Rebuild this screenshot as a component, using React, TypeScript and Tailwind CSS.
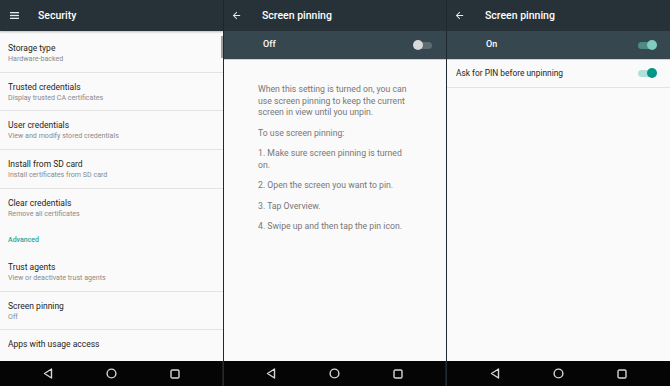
import React from "react";

const font = { fontFamily: "Roboto, 'Noto Sans', sans-serif" };

function NavBar({ last }: { last?: boolean }) {
  return (
    <div className={`h-[25px] bg-[#050505] flex items-center justify-center gap-[53px] ${last ? "" : "border-r border-[#1c1c1c]"}`}>
      <svg width="10" height="11" viewBox="0 0 10 11">
        <path d="M8.5 1 L1.5 5.5 L8.5 10 Z" fill="none" stroke="#d6d6d6" strokeWidth="1.4" strokeLinejoin="round" />
      </svg>
      <svg width="11" height="11" viewBox="0 0 11 11">
        <circle cx="5.5" cy="5.5" r="4.4" fill="none" stroke="#d6d6d6" strokeWidth="1.4" />
      </svg>
      <svg width="10" height="10" viewBox="0 0 10 10">
        <rect x="1" y="1" width="8" height="8" rx="1.3" fill="none" stroke="#d6d6d6" strokeWidth="1.4" />
      </svg>
    </div>
  );
}

function BackArrow() {
  return (
    <svg width="11" height="11" viewBox="0 0 24 24">
      <path d="M20 11H7.83l5.59-5.59L12 4l-8 8 8 8 1.41-1.41L7.83 13H20v-2z" fill="#e8ecee" />
    </svg>
  );
}

function Item({ title, sub, divider = true }: { title: string; sub?: string; divider?: boolean }) {
  return (
    <div className={`h-[38.7px] pl-[8px] pt-[9px] ${divider ? "border-b border-[#e3e3e3]" : ""}`}>
      <div className="text-[8.5px] leading-[11px] text-[#1e1e1e]">{title}</div>
      {sub && <div className="text-[7.1px] leading-[10px] text-[#8a8a8a]">{sub}</div>}
    </div>
  );
}

function SecurityPanel() {
  return (
    <div className="w-[223px] h-full flex flex-col bg-[#fafafa] relative">
      <div className="h-[31px] bg-[#263238] flex items-center shadow-[0_1px_2px_rgba(0,0,0,0.25)] z-10">
        <svg width="9" height="7" viewBox="0 0 9 7" className="ml-[10px]">
          <rect x="0" y="0" width="9" height="1.3" fill="#e8ecee" />
          <rect x="0" y="2.85" width="9" height="1.3" fill="#e8ecee" />
          <rect x="0" y="5.7" width="9" height="1.3" fill="#e8ecee" />
        </svg>
        <span className="ml-[19px] text-[10.5px] font-medium text-white">Security</span>
      </div>
      <div className="absolute right-0 top-[36px] w-[2px] h-[22px] bg-[#9e9e9e]" />
      <div className="flex-1 flex flex-col pt-[3px] overflow-hidden">
        <Item title="Storage type" sub="Hardware-backed" />
        <Item title="Trusted credentials" sub="Display trusted CA certificates" />
        <Item title="User credentials" sub="View and modify stored credentials" />
        <Item title="Install from SD card" sub="Install certificates from SD card" />
        <Item title="Clear credentials" sub="Remove all certificates" divider={false} />
        <div className="h-[25.5px] pl-[8px] flex items-center text-[7px] font-medium text-[#26a69a]">Advanced</div>
        <Item title="Trust agents" sub="View or deactivate trust agents" />
        <Item title="Screen pinning" sub="Off" />
        <div className="pl-[8px] pt-[9px] text-[8.5px] leading-[11px] text-[#1e1e1e]">Apps with usage access</div>
      </div>
      <NavBar />
    </div>
  );
}

function Toggle({ on, dark }: { on: boolean; dark?: boolean }) {
  const track = on ? (dark ? "bg-[#4f8a85]" : "bg-[#b2dfdb]") : "bg-[#5d6b72]";
  const thumb = on ? (dark ? "bg-[#80cbc4]" : "bg-[#009688]") : "bg-[#d9d9d9]";
  return (
    <div className={`relative w-[17px] h-[7px] rounded-full ${track}`}>
      <div className={`absolute top-[-2px] w-[10px] h-[10px] rounded-full ${thumb} ${on ? "right-[-2px]" : "left-[-2px]"}`} />
    </div>
  );
}

function PinningHeader({ on }: { on: boolean }) {
  return (
    <>
      <div className="h-[31px] bg-[#263238] flex items-center">
        <div className="ml-[7px] flex"><BackArrow /></div>
        <span className="ml-[20px] text-[10.5px] font-medium text-white">Screen pinning</span>
      </div>
      <div className="h-[29px] bg-[#37474f] flex items-center border-b border-[#cfd3d5]">
        <span className="ml-[39px] text-[9px] font-medium text-white">{on ? "On" : "Off"}</span>
        <div className={`ml-auto ${on ? "mr-[15px]" : "mr-[14px]"}`}><Toggle on={on} dark /></div>
      </div>
    </>
  );
}

function OffPanel() {
  const p = "text-[8.7px] leading-[11.5px] text-[#777777]";
  return (
    <div className="w-[223px] h-full flex flex-col bg-[#fafafa] border-l border-[#1f292e]">
      <PinningHeader on={false} />
      <div className="flex-1 pl-[34px] pr-[4px] pt-[24px] flex flex-col gap-[9px]">
        <p className={p}>
          When this setting is turned on, you can
          <br />use screen pinning to keep the current
          <br />screen in view until you unpin.
        </p>
        <p className={p}>To use screen pinning:</p>
        <p className={p}>
          1. Make sure screen pinning is turned
          <br />on.
        </p>
        <p className={p}>2. Open the screen you want to pin.</p>
        <p className={p}>3. Tap Overview.</p>
        <p className={p}>4. Swipe up and then tap the pin icon.</p>
      </div>
      <NavBar />
    </div>
  );
}

function OnPanel() {
  return (
    <div className="flex-1 h-full flex flex-col bg-[#fafafa] border-l border-[#1f292e]">
      <PinningHeader on />
      <div className="flex-1">
        <div className="h-[28px] flex items-center pl-[9px] pr-[15px] border-b border-[#e3e3e3]">
          <span className="text-[8.4px] text-[#1e1e1e]">Ask for PIN before unpinning</span>
          <div className="ml-auto"><Toggle on /></div>
        </div>
      </div>
      <NavBar last />
    </div>
  );
}

export default function App() {
  return (
    <div className="w-[670px] h-[386px] flex overflow-hidden bg-[#fafafa]" style={font}>
      <SecurityPanel />
      <OffPanel />
      <OnPanel />
    </div>
  );
}
